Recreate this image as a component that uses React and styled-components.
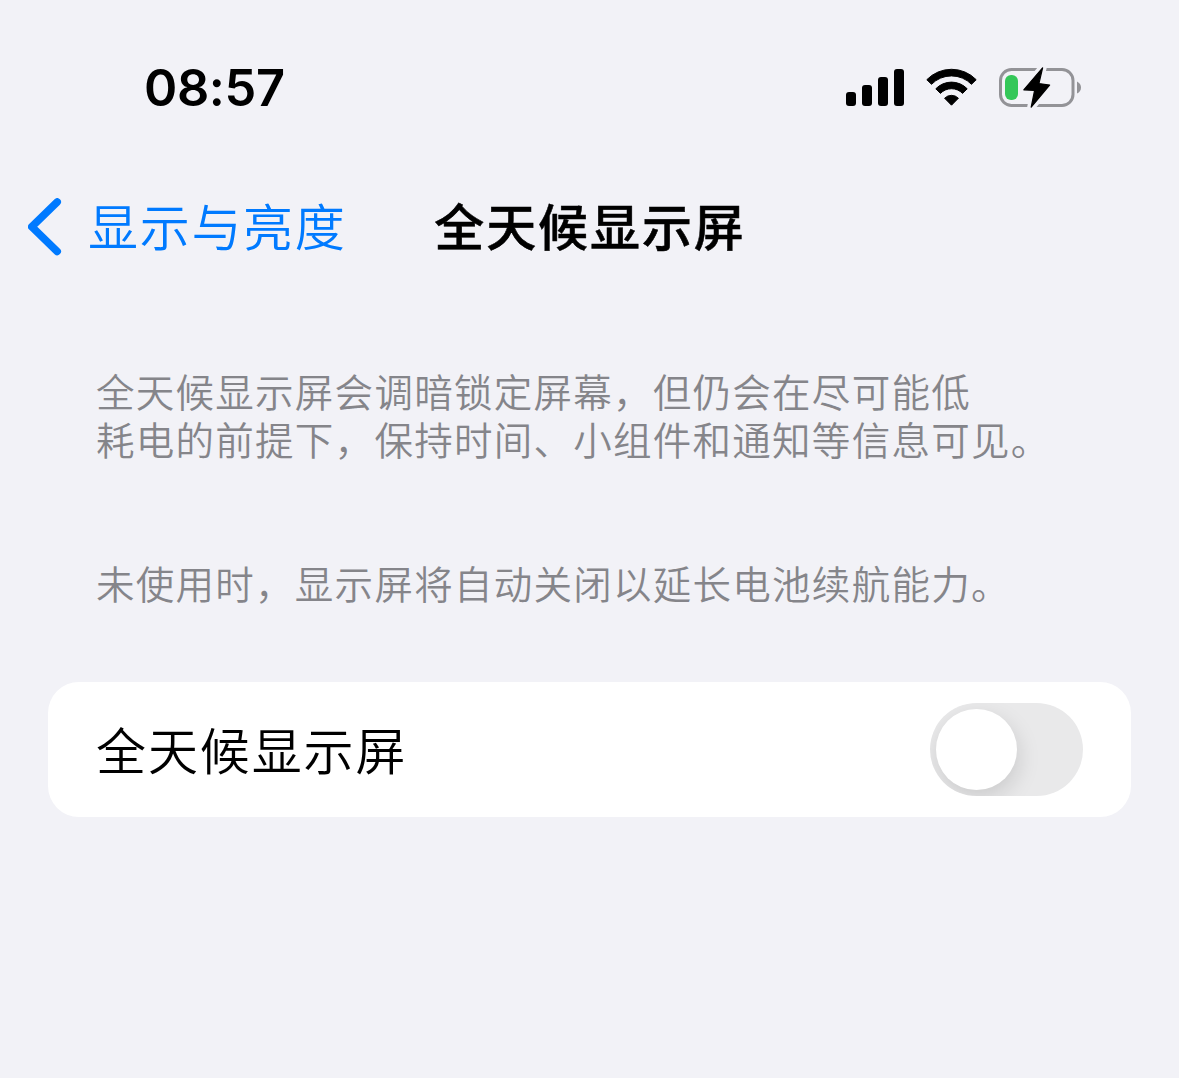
import React, { useState } from "react";
import styled, { createGlobalStyle } from "styled-components";

const GlobalStyle = createGlobalStyle`
  body {
    margin: 0;
    background-color: #f2f2f7;
    font-family: "Noto Sans CJK SC", sans-serif;
  }
`;

const Screen = styled.div`
  min-height: 1078px;
  background-color: #f2f2f7;
  color: black;
  box-sizing: border-box;
  overflow: hidden;
`;

const StatusBar = styled.div`
  height: 176px;
  padding: 0 96px 0 144px;
  display: flex;
  align-items: center;
  justify-content: space-between;
  box-sizing: border-box;
`;

const Time = styled.div`
  font-family: Inter, sans-serif;
  font-size: 50.5px;
  font-weight: 600;
  letter-spacing: -0.4px;
  line-height: 60px;
`;

const StatusIcons = styled.div`
  padding-bottom: 2px;
  display: flex;
  align-items: center;
  gap: 21px;
`;

const Icon = styled.svg`
  display: block;
  flex-shrink: 0;
`;

const NavBar = styled.div`
  height: 102px;
  padding: 0 28px;
  display: grid;
  grid-template-columns: 1fr auto 1fr;
  align-items: center;
`;

const BackButton = styled.button`
  padding: 0;
  border: none;
  background: none;
  color: #007aff;
  display: flex;
  align-items: center;
  gap: 26px;
  font-family: inherit;
  font-size: 50px;
  font-weight: 350;
  letter-spacing: 1.7px;
  line-height: 60px;
  cursor: pointer;
`;

const BackLabel = styled.span`
  padding-bottom: 7px;
`;

const Title = styled.h1`
  margin: 0;
  padding: 0 0 7px 1px;
  font-size: 50px;
  font-weight: 500;
  letter-spacing: 1.9px;
  line-height: 60px;
  -webkit-text-stroke: 0.5px black;
`;

const Content = styled.div`
  padding: 88px 48px 0;
`;

const Note = styled.p`
  margin: 0 0 ${(props) => props.$gap}px;
  padding-left: 48px;
  color: #85858a;
  font-size: 38.5px;
  font-weight: 350;
  letter-spacing: 1.27px;
  line-height: 48px;
  white-space: nowrap;
`;

const Card = styled.div`
  height: 135px;
  padding: 0 48px;
  background-color: white;
  border-radius: 31px;
  display: flex;
  align-items: center;
  justify-content: space-between;
  box-sizing: border-box;
`;

const Label = styled.span`
  padding-bottom: 3px;
  font-size: 50px;
  font-weight: 350;
  letter-spacing: 1.9px;
  line-height: 60px;
`;

const Switch = styled.button`
  width: 153px;
  height: 93px;
  padding: 6px;
  border: none;
  border-radius: 47px;
  background-color: ${(props) => (props.$on ? "#34c759" : "#e9e9ea")};
  display: flex;
  justify-content: ${(props) => (props.$on ? "flex-end" : "flex-start")};
  overflow: hidden;
  cursor: pointer;
`;

const Knob = styled.span`
  width: 81px;
  height: 81px;
  border-radius: 50%;
  background-color: white;
  box-shadow: 2px 8px 22px rgba(0, 0, 0, 0.13);
`;

const Signal = () => (
  <Icon width="58" height="40" viewBox="846 67 58 40">
    <rect x="846" y="92" width="10" height="14" rx="3" />
    <rect x="862" y="85" width="10" height="21" rx="3" />
    <rect x="878" y="77" width="10" height="29" rx="3" />
    <rect x="894" y="69" width="10" height="37" rx="3" />
  </Icon>
);

const Wifi = () => (
  <Icon width="53" height="40" viewBox="925 67 53 40">
    <g stroke="black" strokeWidth="1" strokeLinejoin="round">
      <path d="M926.8 79.7 A34.5 34.5 0 0 1 976.2 79.7 L971.5 84.3 A28 28 0 0 0 931.5 84.3 Z" />
      <path d="M935.8 88.8 A21.8 21.8 0 0 1 967.2 88.8 L962.6 93.4 A15.5 15.5 0 0 0 940.4 93.4 Z" />
      <path d="M944.6 98.2 A9.8 9.8 0 0 1 958.4 98.2 L951.5 105.2 Z" />
    </g>
  </Icon>
);

const BOLT = "1042.6,67.8 1023.8,89.8 1034.6,90.4 1031.2,107.2 1049.6,85 1038.9,83.6";

const Battery = () => (
  <Icon width="84" height="42" viewBox="999 66 84 42">
    <rect x="1000.5" y="69.5" width="72.5" height="36" rx="11" fill="none" stroke="#939397" strokeWidth="3" />
    <path d="M1077 81.5 Q1081 83.5 1081 87.5 Q1081 91.5 1077 93.5 Z" fill="#939397" />
    <rect x="1005" y="75" width="13" height="25" rx="6" fill="#34c759" />
    <polygon points={BOLT} fill="#f2f2f7" stroke="#f2f2f7" strokeWidth="8" strokeLinejoin="round" />
    <polygon points={BOLT} stroke="black" strokeWidth="1.2" strokeLinejoin="round" />
  </Icon>
);

const Chevron = () => (
  <Icon width="34" height="58" viewBox="28 198 34 58" fill="none">
    <path
      d="M57.2 202 L31.8 226.8 L57.2 251.4"
      stroke="#007aff"
      strokeWidth="7.6"
      strokeLinecap="round"
      strokeLinejoin="round"
    />
  </Icon>
);

const App = () => {
  const [on, setOn] = useState(false);

  return (
    <>
      <GlobalStyle />
      <Screen>
        <StatusBar>
          <Time>08:57</Time>
          <StatusIcons>
            <Signal />
            <Wifi />
            <Battery />
          </StatusIcons>
        </StatusBar>
        <NavBar>
          <BackButton>
            <Chevron />
            <BackLabel>显示与亮度</BackLabel>
          </BackButton>
          <Title>全天候显示屏</Title>
        </NavBar>
        <Content>
          <Note $gap={96}>
            全天候显示屏会调暗锁定屏幕，但仍会在尽可能低
            <br />
            耗电的前提下，保持时间、小组件和通知等信息可见。
          </Note>
          <Note $gap={76}>未使用时，显示屏将自动关闭以延长电池续航能力。</Note>
          <Card>
            <Label>全天候显示屏</Label>
            <Switch $on={on} onClick={() => setOn(!on)}>
              <Knob />
            </Switch>
          </Card>
        </Content>
      </Screen>
    </>
  );
};

export default App;
